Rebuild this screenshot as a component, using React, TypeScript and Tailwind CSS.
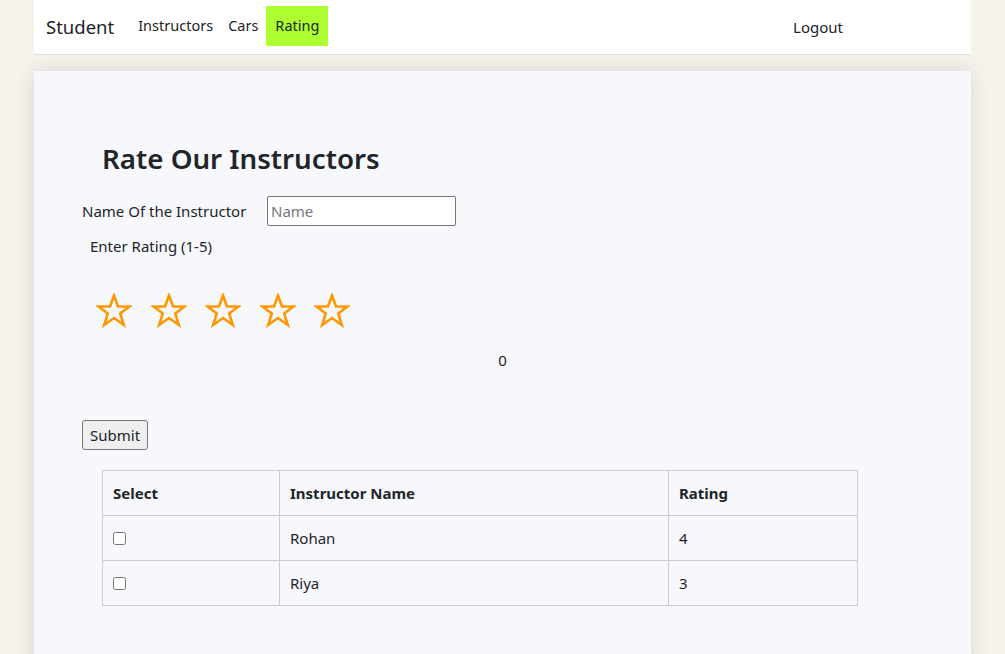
import React from "react";

const Star: React.FC = () => (
  <svg width="36" height="36" viewBox="0 0 36 36" className="block">
    <polygon
      points="18,2.5 22,13.5 33.5,13.5 24.2,20.5 27.8,32 18,25 8.2,32 11.8,20.5 2.5,13.5 14,13.5"
      fill="none"
      stroke="#ff9800"
      strokeWidth="2.6"
      strokeLinejoin="miter"
    />
  </svg>
);

const rows = [
  { name: "Rohan", rating: 4 },
  { name: "Riya", rating: 3 },
];

const App: React.FC = () => {
  return (
    <div className="min-h-[654px] bg-[#f6f2ec] text-[#212529] font-['Noto_Sans',sans-serif]">
      <nav className="mx-[34px] h-[55px] bg-white border-b border-[#dee2e6] flex items-center">
        <span className="ml-[12px] text-[18.5px] mr-[20px]">Student</span>
        <div className="flex items-center h-[40px] -mt-[2px] text-[14.5px]">
          <a href="#" className="px-[4px] h-full flex items-center">Instructors</a>
          <a href="#" className="pl-[11px] pr-[8px] h-full flex items-center">Cars</a>
          <a href="#" className="px-[9px] h-full flex items-center bg-[#adff2f]">Rating</a>
        </div>
        <a href="#" className="ml-auto mr-[128px] text-[15px]">Logout</a>
      </nav>

      <div className="mx-[34px] mt-[16px] bg-[#f7f8fc] shadow-[0_0_20px_rgba(0,0,0,0.12)] pt-[70px] pb-[64px] px-[48px] text-[15px]">
        <h1 className="ml-[20px] text-[27.7px] font-semibold leading-[34px]">Rate Our Instructors</h1>
        <div className="mt-[21px] flex items-center">
          <label className="w-[185px]">Name Of the Instructor</label>
          <input
            placeholder="Name"
            className="w-[189px] h-[30px] bg-white border border-[#767676] rounded-[2px] px-[3px] text-[15px] placeholder:text-[#757575] outline-none"
          />
        </div>
        <div className="mt-[9px] ml-[8px]">Enter Rating (1-5)</div>
        <div className="mt-[35px] ml-[14px] flex gap-[18.5px]">
          {[0, 1, 2, 3, 4].map((i) => (
            <Star key={i} />
          ))}
        </div>
        <div className="mt-[20px] text-center">0</div>
        <button className="mt-[49px] h-[30px] px-[7px] bg-[#efefef] border border-[#767676] rounded-[3px] text-[15px]">
          Submit
        </button>
        <table className="mt-[20px] ml-[20px] w-[756px] border-collapse">
          <thead>
            <tr className="h-[45px]">
              <th className="w-[177px] border border-[#ccc] text-left px-[10px] font-bold">Select</th>
              <th className="w-[389px] border border-[#ccc] text-left px-[10px] font-bold">Instructor Name</th>
              <th className="border border-[#ccc] text-left px-[10px] font-bold">Rating</th>
            </tr>
          </thead>
          <tbody>
            {rows.map((r) => (
              <tr key={r.name} className="h-[45px]">
                <td className="border border-[#ccc] px-[10px]">
                  <input type="checkbox" className="block w-[13px] h-[13px]" />
                </td>
                <td className="border border-[#ccc] px-[10px]">{r.name}</td>
                <td className="border border-[#ccc] px-[10px]">{r.rating}</td>
              </tr>
            ))}
          </tbody>
        </table>
      </div>
    </div>
  );
};

export default App;
